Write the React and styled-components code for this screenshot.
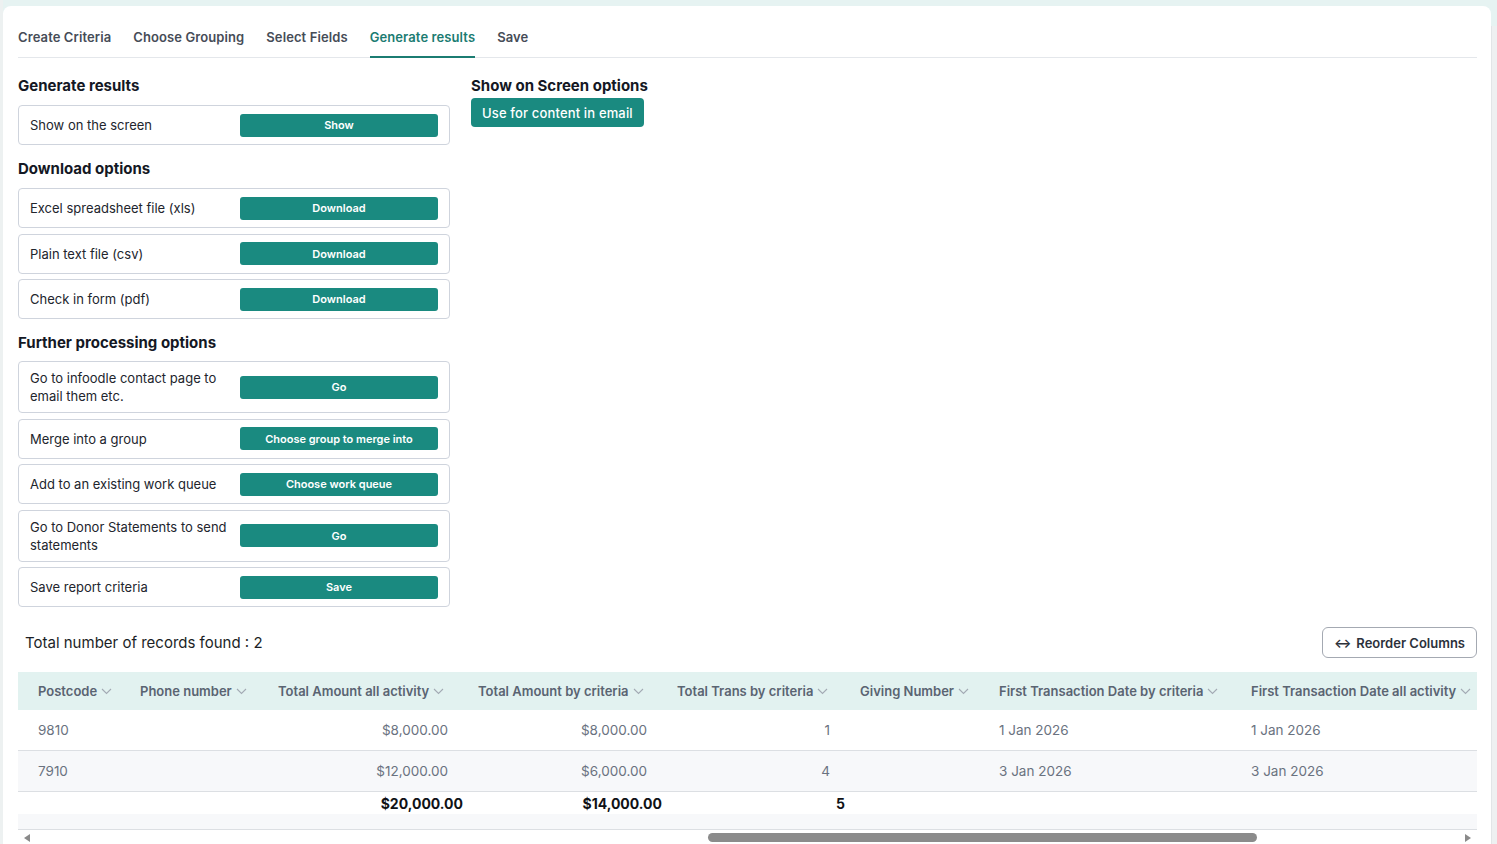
import React from 'react';
import styled, { createGlobalStyle } from 'styled-components';

const GlobalStyle = createGlobalStyle`
  html, body {
    margin: 0;
    padding: 0;
    background: #e6f3f2;
  }
  body {
    font-family: Inter, "Open Sans", sans-serif;
    color: #1f2430;
    overflow: hidden;
  }
  * { box-sizing: border-box; }
`;

const teal = '#1a8a80';

const Shell = styled.div`
  display: flex;
  min-height: 844px;
  padding-top: 6px;
  background: linear-gradient(to right, #edf1f1 0 3px, transparent 3px);
`;

const Card = styled.div`
  flex: 1;
  min-width: 0;
  margin-left: 3px;
  background: #fff;
  border-radius: 8px 8px 0 0;
  padding: 22px 14px 0 15px;
`;

const Gutter = styled.div`
  flex: none;
  width: 6px;
  margin-top: 20px;
  background: #eef0f1;
  border-left: 1px solid #e2e5e7;
`;

const Tabs = styled.nav`
  display: flex;
  gap: 22px;
  border-bottom: 1px solid #e4e7eb;
`;

const Tab = styled.div`
  font-size: 13px;
  line-height: 18px;
  font-weight: 600;
  letter-spacing: 0.1px;
  padding-bottom: 10px;
  margin-bottom: -1px;
  color: ${(p) => (p.$active ? '#1b7c72' : '#464c57')};
  border-bottom: 2px solid ${(p) => (p.$active ? '#1b7c72' : 'transparent')};
`;

const Columns = styled.div`
  display: grid;
  grid-template-columns: 432px 1fr;
  column-gap: 21px;
  margin-top: 18px;
`;

const Stack = styled.section`
  display: flex;
  flex-direction: column;
`;

const Heading = styled.h3`
  margin: ${(p) => (p.$first ? '0' : '14px')} 0 ${(p) => p.$gap || 9}px;
  font-size: 15px;
  line-height: 20px;
  font-weight: 700;
  color: #141824;
`;

const Rows = styled.div`
  display: flex;
  flex-direction: column;
  gap: 5.5px;
`;

const OptionRow = styled.div`
  display: flex;
  align-items: center;
  min-height: 40px;
  padding: 7px 11px;
  border: 1px solid #cfd4dd;
  border-radius: 4px;
`;

const OptionLabel = styled.span`
  flex: 1;
  font-size: 13px;
  line-height: 18px;
  color: #22252d;
  padding-right: 6px;
`;

const RowButton = styled.button`
  width: 198px;
  height: 23px;
  border: 0;
  border-radius: 3px;
  background: ${teal};
  color: #fff;
  font-family: inherit;
  font-size: 11px;
  font-weight: 600;
  cursor: pointer;
`;

const WideButton = styled.button`
  align-self: flex-start;
  height: 29px;
  margin-top: -7px;
  padding: 0 11px;
  border: 0;
  border-radius: 4px;
  background: ${teal};
  color: #fff;
  font-family: inherit;
  font-size: 13px;
  font-weight: 500;
  letter-spacing: 0.15px;
`;

const Summary = styled.div`
  display: flex;
  align-items: center;
  justify-content: space-between;
  margin-top: 20px;
  padding-left: 7px;
`;

const Count = styled.span`
  font-size: 15px;
  color: #1c1f26;
`;

const OutlineButton = styled.button`
  display: flex;
  align-items: center;
  gap: 5px;
  height: 31px;
  padding: 0 11px;
  border: 1px solid #a4a9b2;
  border-radius: 6px;
  background: #fff;
  font-family: inherit;
  font-size: 13px;
  font-weight: 600;
  color: #2c313b;
`;

const Table = styled.div`
  margin-top: 14px;
  display: grid;
  grid-template-columns: 102px 138px 200px 199px 183px 139px 252px minmax(0, 1fr);
`;

const HeadCell = styled.div`
  display: flex;
  align-items: center;
  gap: 4px;
  height: 38px;
  padding: 0 10px 0 20px;
  background: #e2f2f0;
  font-size: 13px;
  font-weight: 600;
  color: #5a6472;
  white-space: nowrap;
`;

const ChevronSvg = styled.svg`
  flex: none;
  width: 11px;
  height: 7px;
  margin-top: 1px;
`;

const Cell = styled.div`
  height: 41px;
  display: flex;
  align-items: center;
  justify-content: ${(p) => (p.$num ? 'flex-end' : 'flex-start')};
  padding: 0 10px 0 20px;
  font-size: 13.5px;
  color: #6a7280;
  background: ${(p) => (p.$alt ? '#f7f8fa' : '#fff')};
  border-bottom: 1px solid #dcdfe3;
`;

const FootCell = styled.div`
  height: 22px;
  display: flex;
  align-items: center;
  justify-content: flex-end;
  margin-right: ${(p) => (p.$value ? '-5px' : '0')};
  font-size: 14px;
  font-weight: 700;
  color: #101216;
`;

const Band = styled.div`
  grid-column: 1 / -1;
  height: 16px;
  background: #f7f8fa;
  border-bottom: 1px solid #dcdfe3;
`;

const ScrollBar = styled.div`
  grid-column: 1 / -1;
  display: flex;
  align-items: center;
  height: 15px;
  padding: 0 6px;
  gap: 4px;
`;

const Arrow = styled.span`
  width: 0;
  height: 0;
  border-top: 4px solid transparent;
  border-bottom: 4px solid transparent;
  ${(p) => (p.$dir === 'left' ? 'border-right: 6px solid #8a8a8a;' : 'border-left: 6px solid #8a8a8a;')}
`;

const Track = styled.div`
  flex: 1;
  height: 9px;
`;

const Thumb = styled.div`
  height: 9px;
  border-radius: 5px;
  background: #8b8b8b;
  margin-left: ${(p) => p.$offset}%;
  width: ${(p) => p.$size}%;
`;

const Chevron = () => (
  <ChevronSvg viewBox="0 0 11 7" fill="none">
    <polyline points="1,1 5.5,5.5 10,1" stroke="#a3aab4" strokeWidth="1.1" />
  </ChevronSvg>
);

const tabs = ['Create Criteria', 'Choose Grouping', 'Select Fields', 'Generate results', 'Save'];

const downloads = [
  ['Excel spreadsheet file (xls)', 'Download'],
  ['Plain text file (csv)', 'Download'],
  ['Check in form (pdf)', 'Download'],
];

const further = [
  ['Go to infoodle contact page to email them etc.', 'Go'],
  ['Merge into a group', 'Choose group to merge into'],
  ['Add to an existing work queue', 'Choose work queue'],
  ['Go to Donor Statements to send statements', 'Go'],
  ['Save report criteria', 'Save'],
];

const columns = [
  'Postcode',
  'Phone number',
  'Total Amount all activity',
  'Total Amount by criteria',
  'Total Trans by criteria',
  'Giving Number',
  'First Transaction Date by criteria',
  'First Transaction Date all activity',
];

const records = [
  ['9810', '', '$8,000.00', '$8,000.00', '1', '', '1 Jan 2026', '1 Jan 2026'],
  ['7910', '', '$12,000.00', '$6,000.00', '4', '', '3 Jan 2026', '3 Jan 2026'],
];

const numeric = [2, 3, 4];
const totals = ['', '', '$20,000.00', '$14,000.00', '5', '', '', ''];

const OptionList = ({ items }) => (
  <Rows>
    {items.map(([label, action]) => (
      <OptionRow key={label}>
        <OptionLabel>{label}</OptionLabel>
        <RowButton>{action}</RowButton>
      </OptionRow>
    ))}
  </Rows>
);

export default function App() {
  return (
    <>
      <GlobalStyle />
      <Shell>
        <Card>
          <Tabs>
            {tabs.map((t) => (
              <Tab key={t} $active={t === 'Generate results'}>
                {t}
              </Tab>
            ))}
          </Tabs>

          <Columns>
            <Stack>
              <Heading $first>Generate results</Heading>
              <OptionList items={[['Show on the screen', 'Show']]} />
              <Heading>Download options</Heading>
              <OptionList items={downloads} />
              <Heading $gap={8}>Further processing options</Heading>
              <OptionList items={further} />
            </Stack>
            <Stack>
              <Heading $first>Show on Screen options</Heading>
              <WideButton>Use for content in email</WideButton>
            </Stack>
          </Columns>

          <Summary>
            <Count>Total number of records found : 2</Count>
            <OutlineButton>
              <span>↔</span> Reorder Columns
            </OutlineButton>
          </Summary>

          <Table>
            {columns.map((c) => (
              <HeadCell key={c}>
                {c}
                <Chevron />
              </HeadCell>
            ))}
            {records.map((r, ri) =>
              r.map((v, ci) => (
                <Cell key={`${ri}-${ci}`} $alt={ri % 2 === 1} $num={numeric.includes(ci)}>
                  {v}
                </Cell>
              ))
            )}
            {totals.map((v, ci) => (
              <FootCell key={`t-${ci}`} $value={!!v}>
                {v}
              </FootCell>
            ))}
            <Band />
            <ScrollBar>
              <Arrow $dir="left" />
              <Track>
                <Thumb $offset={47.2} $size={38.5} />
              </Track>
              <Arrow $dir="right" />
            </ScrollBar>
          </Table>
        </Card>
        <Gutter />
      </Shell>
    </>
  );
}
